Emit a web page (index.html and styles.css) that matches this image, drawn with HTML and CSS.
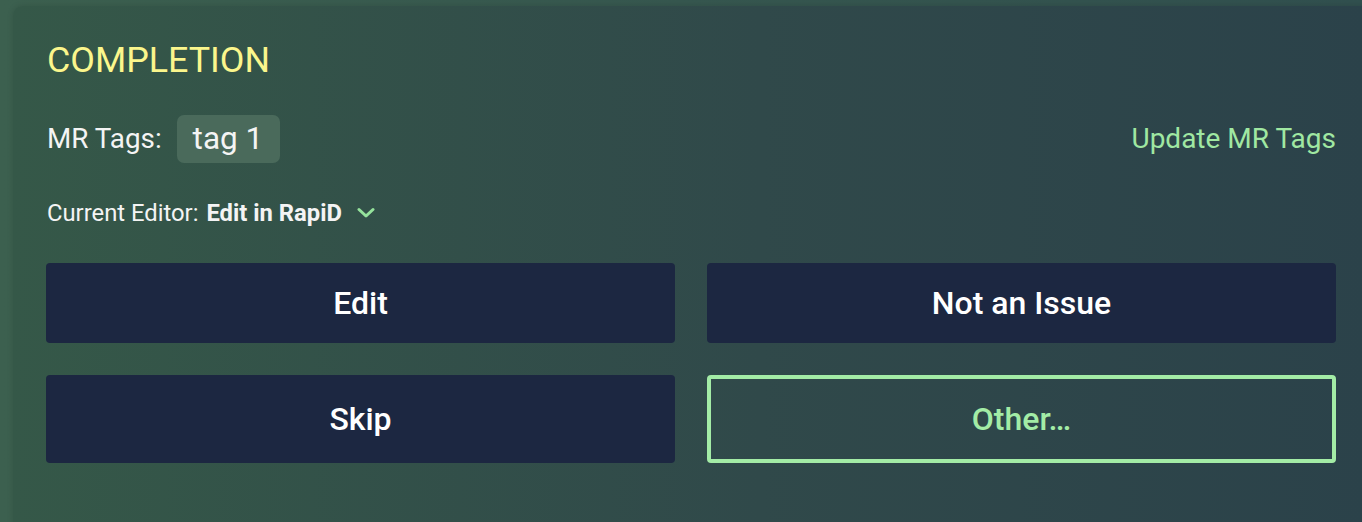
FILE: index.html
```html
<!DOCTYPE html>
<html>
<head>
<meta charset="utf-8">
<link rel="stylesheet" href="styles.css">
</head>
<body>
<div class="page">
  <section class="panel">
    <h2 class="title">COMPLETION</h2>
    <div class="tags-row">
      <div class="tags-left">
        <span class="tags-label">MR Tags:</span>
        <span class="chip">tag 1</span>
      </div>
      <a class="update-link">Update MR Tags</a>
    </div>
    <div class="editor-row">
      <span class="editor-label">Current Editor:</span>
      <span class="editor-name">Edit in RapiD</span>
      <svg class="chevron" width="18" height="12" viewBox="0 0 18 12"><path d="M2 2.5 L9 9 L16 2.5" fill="none" stroke="#95e39c" stroke-width="3" stroke-linecap="round" stroke-linejoin="round"/></svg>
    </div>
    <div class="actions">
      <button class="btn">Edit</button>
      <button class="btn">Not an Issue</button>
      <button class="btn">Skip</button>
      <button class="btn btn-outline">Other…</button>
    </div>
  </section>
</div>
</body>
</html>
```
FILE: styles.css
```css
html, body {
  margin: 0;
  padding: 0;
  height: 100%;
}
body {
  background: linear-gradient(90deg, #3c604f 0%, #36574f 50%, #31504f 100%);
  font-family: Roboto, "Liberation Sans", sans-serif;
  overflow: hidden;
}
.page {
  padding: 6px 0 0 13px;
  height: 100%;
  box-sizing: border-box;
}
.panel {
  width: 1356px;
  min-height: 540px;
  box-sizing: border-box;
  padding: 34px 33px 40px 33px;
  border-radius: 9px 0 0 0;
  background: linear-gradient(90deg, #355848 0%, #30494a 55%, #2b424a 100%);
  box-shadow: 0 0 6px rgba(0, 0, 0, 0.12);
}
.title {
  margin: 0 0 35px 1px;
  font-size: 35.8px;
  line-height: 40px;
  font-weight: 400;
  color: #fbf68c;
}
.tags-row {
  display: flex;
  align-items: center;
  justify-content: space-between;
  height: 48px;
}
.tags-left {
  display: flex;
  align-items: center;
  gap: 15px;
}
.tags-label {
  font-size: 27.8px;
  line-height: 48px;
  color: #f4f4f4;
  padding-left: 1px;
}
.chip {
  display: inline-block;
  height: 48px;
  padding: 0 17px 0 16px;
  font-size: 31.5px;
  line-height: 48px;
  color: #f4f4f4;
  background: #4a6a5b;
  border-radius: 7px;
}
.update-link {
  font-size: 28px;
  line-height: 48px;
  color: #a0e8a2;
  cursor: pointer;
}
.editor-row {
  display: flex;
  align-items: center;
  margin-top: 34px;
  height: 32px;
  padding-left: 1px;
  font-size: 23.8px;
  line-height: 32px;
  color: #f4f4f4;
}
.editor-label {
  margin-right: 8px;
}
.editor-name {
  font-weight: 700;
}
.chevron {
  margin-left: 15px;
  margin-top: -1px;
}
.actions {
  margin-top: 34px;
  display: grid;
  grid-template-columns: 1fr 1fr;
  column-gap: 32px;
  row-gap: 32px;
}
.btn {
  display: flex;
  align-items: center;
  justify-content: center;
  min-height: 80px;
  padding: 0 16px;
  border: none;
  border-radius: 4px;
  background: #1c2741;
  color: #ffffff;
  font-family: Roboto, "Liberation Sans", sans-serif;
  font-size: 32px;
  font-weight: 500;
  line-height: 40px;
}
.btn-outline {
  min-height: 88px;
  background: transparent;
  border: 4px solid #a3eca6;
  color: #a3eca6;
}
```
